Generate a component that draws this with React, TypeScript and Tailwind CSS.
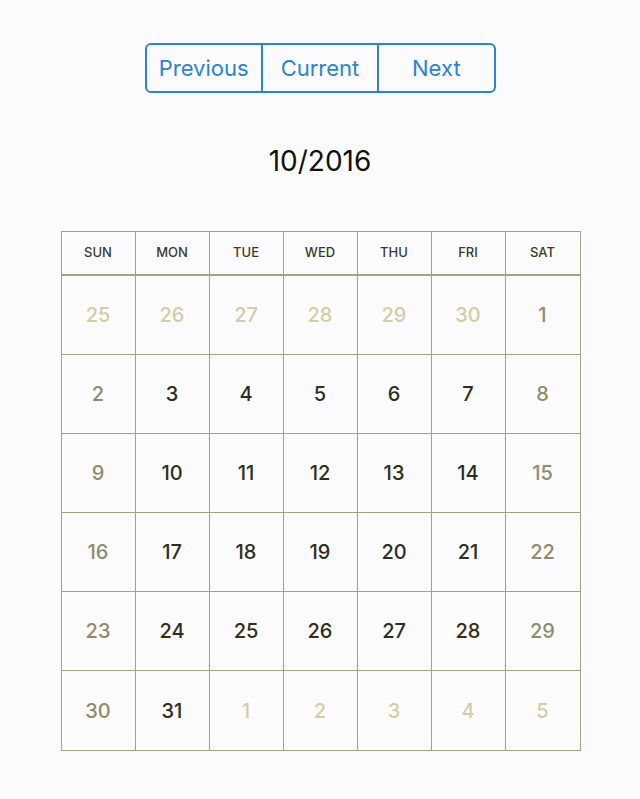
import React from "react";

const weeks: { d: number; other: boolean }[][] = [
  [25, 26, 27, 28, 29, 30].map((d) => ({ d, other: true })).concat([{ d: 1, other: false }]),
  [2, 3, 4, 5, 6, 7, 8].map((d) => ({ d, other: false })),
  [9, 10, 11, 12, 13, 14, 15].map((d) => ({ d, other: false })),
  [16, 17, 18, 19, 20, 21, 22].map((d) => ({ d, other: false })),
  [23, 24, 25, 26, 27, 28, 29].map((d) => ({ d, other: false })),
  [
    { d: 30, other: false },
    { d: 31, other: false },
    { d: 1, other: true },
    { d: 2, other: true },
    { d: 3, other: true },
    { d: 4, other: true },
    { d: 5, other: true },
  ],
];

const days = ["SUN", "MON", "TUE", "WED", "THU", "FRI", "SAT"];

export default function App() {
  return (
    <div
      className="min-h-[799px] w-[640px] bg-[#fbfbfe] flex flex-col items-center pt-[43px]"
      style={{ fontFamily: "Inter, 'Liberation Sans', sans-serif" }}
    >
      <div className="flex w-[351px] h-[50px] border-2 border-[#2a84d2] rounded-[6px] overflow-hidden text-[#2a84d2] text-[22px]">
        <div className="flex-1 flex items-center justify-center border-r-2 border-[#2a84d2]">Previous</div>
        <div className="flex-1 flex items-center justify-center border-r-2 border-[#2a84d2]">Current</div>
        <div className="flex-1 flex items-center justify-center">Next</div>
      </div>
      <div className="mt-[50px] text-[28px] leading-[36px] text-[#111108]">10/2016</div>
      <div className="mt-[52px] ml-[1px] w-[520px] border border-[#a3a278]">
        <div className="grid grid-cols-7 h-[44px] border-b-2 border-[#a3a278]">
          {days.map((d, i) => (
            <div
              key={d}
              className={`flex items-center justify-center text-[13px] font-medium text-[#3a3a28] ${i < 6 ? "border-r border-[#a3a278]" : ""}`}
            >
              {d}
            </div>
          ))}
        </div>
        {weeks.map((w, wi) => (
          <div
            key={wi}
            className={`grid grid-cols-7 h-[79px] ${wi < 5 ? "border-b border-[#a3a278]" : ""}`}
          >
            {w.map((c, i) => {
              const weekend = i === 0 || i === 6;
              const color = c.other
                ? "text-[#d0cfa2]"
                : weekend
                ? "text-[#8e8d68]"
                : "text-[#2e2e1c]";
              return (
                <div
                  key={i}
                  className={`flex items-center justify-center text-[20px] font-medium ${color} ${i < 6 ? "border-r border-[#a3a278]" : ""}`}
                >
                  {c.d}
                </div>
              );
            })}
          </div>
        ))}
      </div>
    </div>
  );
}
